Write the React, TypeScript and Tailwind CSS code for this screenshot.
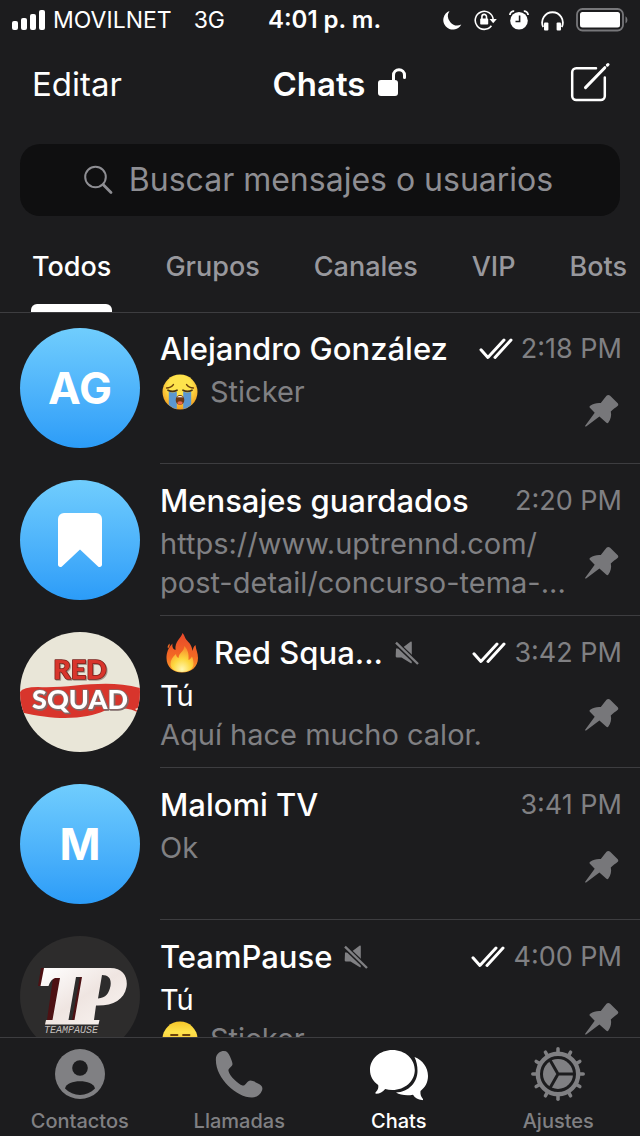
import type { ReactNode } from "react";

type Chat = {
  name: string;
  time: string;
  avatar: ReactNode;
  preview: ReactNode;
  emoji?: ReactNode;
  muted?: boolean;
  read?: boolean;
};

function SignalIcon() {
  return (
    <svg width="33" height="20" viewBox="0 0 33 20" fill="white">
      <rect x="0" y="11" width="6" height="9" rx="2" />
      <rect x="9" y="8" width="6" height="12" rx="2" />
      <rect x="18" y="4" width="6" height="16" rx="2" />
      <rect x="27" y="0" width="6" height="20" rx="2" />
    </svg>
  );
}

function MoonIcon() {
  return (
    <svg width="19" height="20" viewBox="0 0 19 20" fill="white">
      <path d="M6.5 1A9.6 9.6 0 1 0 18.3 14.6A9.4 9.4 0 0 1 6.5 1Z" />
    </svg>
  );
}

function RotationLockIcon() {
  return (
    <svg width="23" height="22" viewBox="0 0 23 22" fill="none" stroke="white" strokeWidth="1.6">
      <path d="M17.4 16.8A9 9 0 1 1 19.2 10.5" />
      <path d="M15.5 10h7.3l-3.6 4.3Z" fill="white" stroke="none" />
      <rect x="6.2" y="9.6" width="8" height="6" rx="0.8" fill="white" stroke="none" />
      <path d="M7.9 10V7.7a2.3 2.3 0 0 1 4.6 0V10" />
    </svg>
  );
}

function AlarmIcon() {
  return (
    <svg width="20" height="20" viewBox="0 0 20 20">
      <circle cx="10" cy="10.8" r="8.8" fill="white" />
      <path d="M10.6 5.5v6H6.5" fill="none" stroke="#1c1c1e" strokeWidth="1.6" />
      <path d="M.9 5A4 4 0 0 1 5.2 1.2M19.1 5A4 4 0 0 0 14.8 1.2" fill="none" stroke="white" strokeWidth="1.8" />
    </svg>
  );
}

function HeadphonesIcon() {
  return (
    <svg width="23" height="21" viewBox="0 0 23 21">
      <path d="M2.200 17A10.300 10.300 0 1 1 20.800 17" fill="none" stroke="white" strokeWidth="1.8" />
      <rect x="3" y="12.5" width="4.4" height="8" rx="1" fill="white" />
      <rect x="15.6" y="12.5" width="4.4" height="8" rx="1" fill="white" />
    </svg>
  );
}

function BatteryIcon() {
  return (
    <svg width="53" height="24" viewBox="0 0 53 24">
      <rect x="1" y="1" width="46" height="21.5" rx="5.5" fill="none" stroke="#77777a" strokeWidth="1.8" />
      <rect x="4" y="4" width="40" height="15.5" rx="2.5" fill="white" />
      <path d="M49.5 8.2a4.5 4.5 0 0 1 0 7.4Z" fill="#77777a" />
    </svg>
  );
}

function UnlockIcon() {
  return (
    <svg width="30" height="34" viewBox="0 0 30 34">
      <rect x="1" y="12" width="20" height="16" rx="3" fill="white" />
      <path d="M16.5 13V7.300a5.500 5.500 0 0 1 11 0V9.500" fill="none" stroke="white" strokeWidth="3" strokeLinecap="round" />
    </svg>
  );
}

function ComposeIcon() {
  return (
    <svg width="40" height="48" viewBox="0 0 40 48" fill="none" stroke="white" strokeLinecap="round">
      <path d="M26 7.200H6.200a4 4 0 0 0-4 4V35a4 4 0 0 0 4 4h24.600a4 4 0 0 0 4-4V16.500" strokeWidth="2.500" />
      <path d="M15.500 26.600L34.800 6.700" strokeWidth="3" />
      <path d="M37.400 4.100L38 3.500" strokeWidth="3" />
    </svg>
  );
}

function SearchIcon() {
  return (
    <svg width="29" height="30" viewBox="0 0 29 30" fill="none" stroke="#8e8e93" strokeLinecap="round">
      <circle cx="11.500" cy="12" r="10.300" strokeWidth="2" />
      <path d="M19.300 19.800L27 27.500" strokeWidth="2.800" />
    </svg>
  );
}

function ReadIcon() {
  return (
    <svg width="34" height="22" viewBox="0 0 34 22" fill="none" stroke="white" strokeWidth="3" strokeLinecap="round" strokeLinejoin="round">
      <path d="M2 11.800L8.900 19.400L25 2" />
      <path d="M16 19.400L32 2" />
    </svg>
  );
}

function MutedIcon() {
  return (
    <svg width="24" height="24" viewBox="0 0 24 24">
      <path d="M1 7.500h5.500L15.500.8c.8-.5 1.300-.2 1.300.6v20c0 .9-.6 1.100-1.300.6L6.500 16.500H2A1.300 1.300 0 0 1 .7 15.200Z" fill="#808083" />
      <path d="M.5 1.500L23 23" stroke="#1c1c1e" strokeWidth="5" />
      <path d="M1 1.700L23 23" stroke="#808083" strokeWidth="2.400" />
    </svg>
  );
}

function PinIcon() {
  return (
    <svg width="34" height="34" viewBox="0 0 34 34" fill="#77777a">
      <path d="M21.500 1.800c1-1.100 2.300-1.200 3.400-.2l7.600 7.300c1.100 1.100 1 2.300 0 3.200-1.800 1.500-4 3-6.700 5.300.9 4-.1 7.700-2.400 11.200-.5.800-1.300.8-2 .2l-7-6.300L.8 32.800 0 32.100 9.700 18.800l-4.800-5c-.6-.7-.5-1.500.3-2 3.300-2.200 6.700-3.100 10.600-2.700 2.100-2.700 3.800-5.200 5.700-7.300Z" />
    </svg>
  );
}

function CryingEmoji() {
  return (
    <svg width="36" height="36" viewBox="0 0 36 36" role="img" aria-label="😭">
      <defs>
        <radialGradient id="crying-face" cx="50%" cy="35%" r="65%">
          <stop offset="0.500" stopColor="#fee34c" />
          <stop offset="1" stopColor="#f29a1c" />
        </radialGradient>
      </defs>
      <circle cx="18" cy="18" r="17.500" fill="url(#crying-face)" />
      <path d="M4.500 14c2.500 0 5-1 7-3.500M31.500 14c-2.500 0-5-1-7-3.500" stroke="#6b3f0c" strokeWidth="1.300" fill="none" strokeLinecap="round" />
      <path d="M6.800 17.500q4.200 1.800 8 0V35q-4.500-.8-8-4ZM21.200 17.500q4.200 1.800 8 0V31q-3.500 3.200-8 4Z" fill="#5b97d0" />
      <path d="M6 16.200q4.500 2.400 9 0M21 16.200q4.500 2.400 9 0" stroke="#4c3412" strokeWidth="1.700" fill="none" strokeLinecap="round" />
      <ellipse cx="18" cy="26" rx="4.300" ry="5" fill="#6d3710" />
      <path d="M14.800 23.200q3.200-2.600 6.400 0Z" fill="white" />
      <ellipse cx="18" cy="29" rx="2.700" ry="1.800" fill="#e9674c" />
    </svg>
  );
}

function ExpressionlessEmoji() {
  return (
    <svg width="36" height="36" viewBox="0 0 36 36" role="img" aria-label="😑">
      <defs>
        <linearGradient id="flat-face" x1="0" y1="0" x2="0" y2="1">
          <stop offset="0" stopColor="#f5c529" />
          <stop offset="0.300" stopColor="#fee34c" />
          <stop offset="1" stopColor="#f29a1c" />
        </linearGradient>
      </defs>
      <circle cx="18" cy="18" r="17.500" fill="url(#flat-face)" />
      <path d="M9 14h6.500M21 14h6.500M12 24h12" stroke="#6b430c" strokeWidth="1.800" strokeLinecap="round" />
    </svg>
  );
}

function FireEmoji() {
  return (
    <svg width="36" height="40" viewBox="0 0 36 40" role="img" aria-label="🔥">
      <defs>
        <linearGradient id="fire-outer" x1="0" y1="0" x2="0" y2="1">
          <stop offset="0" stopColor="#e8472b" />
          <stop offset="0.600" stopColor="#f36a24" />
          <stop offset="1" stopColor="#fba32c" />
        </linearGradient>
        <radialGradient id="fire-inner" cx="50%" cy="90%" r="90%">
          <stop offset="0" stopColor="#fff6b0" />
          <stop offset="0.450" stopColor="#fdd83f" />
          <stop offset="1" stopColor="#f8832a" />
        </radialGradient>
      </defs>
      <path d="M18.500 0c-1 5-8 8-7 17-3-1-3.500-4-3-6.500C4 15 2.500 20 2.500 25 2.500 34 9 39.500 18 39.500S34 34 34 25c0-5-2-8-2.500-13-2 1.500-2.500 4-3 6-1-8-5-9-7-12.500C20.500 3.500 20 1.500 18.500 0Z" fill="url(#fire-outer)" />
      <path d="M5.500 10.500c-2 2-2.200 3.500-1.500 5 1.500-1.500 2-3 1.500-5Z" fill="#f36a24" />
      <path d="M20 13c1 5-5 6-5.500 12-1.800-1-2.500-2.500-2.500-4-3.500 3-5.500 6-5.500 10 0 5 5 8 11.500 8s11.500-3 11.500-8c0-3-.5-5-1.500-7.500-1 2-2 3-3.500 3.500.5-6-.5-10.500-4.500-14Z" fill="url(#fire-inner)" />
    </svg>
  );
}

function LetterAvatar({ children }: { children: ReactNode }) {
  return (
    <div className="flex size-[120px] items-center justify-center rounded-full bg-linear-to-b from-[#70cdfd] to-[#2b9cf8] text-[44px] leading-none font-bold">
      {children}
    </div>
  );
}

function RedSquadAvatar() {
  return (
    <svg width="120" height="120" viewBox="0 0 120 120" className="rounded-full bg-[#e9e6d8]">
      <path d="M0 60Q3 55 18 55C50 57 84 46 120 56V82Q108 73 84 79C68 86 40 90 0 80Z" fill="#d8352c" />
      <path d="M115 77l5-2v6Z" fill="#e9e6d8" />
      <g fontFamily="Lato, Inter, sans-serif" fontWeight="900" textAnchor="middle" strokeLinejoin="round" paintOrder="stroke">
        <text x="60" y="47" fontSize="27" fill="#d8352c" stroke="#7a211c" strokeWidth="1.500" className="drop-shadow-[1px_1px_0_#a59c90]">
          RED
        </text>
        <text x="60" y="77" fontSize="27" fill="white" stroke="#8a6a68" strokeWidth="1.500" className="drop-shadow-[1px_1px_0_#7d6a68]">
          SQUAD
        </text>
      </g>
    </svg>
  );
}

function TeamPauseAvatar() {
  return (
    <svg width="120" height="120" viewBox="0 0 120 120" className="rounded-full bg-[#2d2c2c]">
      <defs>
        <linearGradient id="tp-metal" x1="0" y1="0" x2="1" y2="1">
          <stop offset="0" stopColor="#ffffff" />
          <stop offset="0.500" stopColor="#efe5e1" />
          <stop offset="1" stopColor="#faf5f2" />
        </linearGradient>
      </defs>
      <path d="M21 32H40L26 50H18ZM33 42H41L33 84H27ZM60 41H64L56 84H52Z" fill="#4d1113" />
      <path
        d="M24 32H90C104 32 108 42 106.500 51 104 64 93 70 76 69.500L74 84H79.500L78.500 88.500H25L26 84H32.500L40 42H35Q31 43 28.500 50H20.500ZM56 41L48.500 84H54.500L62 41ZM82 39L78 62.500C86 62 89 57 90.500 50 91.500 43 89 39 82 39Z"
        fill="url(#tp-metal)"
        fillRule="evenodd"
      />
      <text x="51" y="97" fontSize="10" fontStyle="italic" fontFamily="'Liberation Mono', monospace" textAnchor="middle" fill="#c4bfbc">
        TEAMPAUSE
      </text>
    </svg>
  );
}

function BookmarkIcon() {
  return (
    <svg width="44" height="56" viewBox="0 0 44 56" fill="white">
      <path d="M6 1h32a6 6 0 0 1 6 6v45.500c0 2.500-2.500 3.300-4.200 1.700L22 37.500 4.200 54.200C2.500 55.800 0 55 0 52.500V7a6 6 0 0 1 6-6Z" />
    </svg>
  );
}

function ContactsIcon() {
  return (
    <svg width="54" height="54" viewBox="0 0 54 54">
      <circle cx="27" cy="27" r="25" fill="currentColor" />
      <circle cx="27" cy="21" r="7.800" fill="#1c1c1e" />
      <path d="M12 41.500C14 31.800 40 31.800 42 41.500 34 50 20 50 12 41.500Z" fill="#1c1c1e" />
    </svg>
  );
}

function CallsIcon() {
  return (
    <svg width="54" height="54" viewBox="0 0 54 54" fill="currentColor">
      <path d="M4 10.500C5 6.500 8 4 12 4c3 0 4.500 2 6 5.500 1.500 3.500 2.500 6 2.500 7.500 0 3-4.500 4-4 7 1 5 9.500 13 14 14.500 3 1 4.500-5 8-5 2 0 5 1.500 8.500 3.500 3 1.800 4 3.500 3 6.500-1.500 4.500-5.500 7-10 7C24 50.500 2 30 4 10.500Z" />
    </svg>
  );
}

function ChatsIcon() {
  return (
    <svg width="58" height="54" viewBox="0 0 58 54" fill="currentColor">
      <path d="M22.400 3C35 3 44.800 11.800 44.800 23S35 43 22.400 43c-2.500 0-5-.4-7.200-1-2.500 3-5.500 4.800-9 4.800-1 0-1.200-.8-.5-1.500 2.300-2.200 3-4.800 2.500-7.300C3 34.500 0 29.200 0 23 0 11.800 9.900 3 22.400 3Z" />
      <path d="M44.500 10C52.500 13 58 20.500 58 29c0 6.500-3 11.500-7.500 15-.3 3.500.3 5.500 2.300 7.800.6.700.2 1.500-.8 1.300-3.800-.4-7-2-9-5.300-6.500 1.200-13 .2-17-2.300C39 45 47.500 35 47.500 24c0-5-1-10-3-14Z" />
    </svg>
  );
}

function SettingsIcon() {
  return (
    <svg width="56" height="56" viewBox="0 0 56 56">
      <g stroke="currentColor" strokeWidth="3.500" strokeLinecap="round">
        {Array.from({ length: 12 }, (_, i) => (
          <line key={i} x1="28" y1="7" x2="28" y2="2.800" transform={`rotate(${i * 30} 28 28)`} />
        ))}
      </g>
      <circle cx="28" cy="28" r="20.200" fill="none" stroke="currentColor" strokeWidth="4.400" />
      <circle cx="28" cy="28" r="15" fill="currentColor" />
      <path d="M28 28H44M28 28L20 14.100M28 28L20 41.900" stroke="#1c1c1e" strokeWidth="3" />
    </svg>
  );
}

const tabs = ["Todos", "Grupos", "Canales", "VIP", "Bots"];

const chats: Chat[] = [
  {
    name: "Alejandro González",
    time: "2:18 PM",
    read: true,
    avatar: <LetterAvatar>AG</LetterAvatar>,
    preview: (
      <p className="flex items-center gap-3 pl-0.5">
        <CryingEmoji /> Sticker
      </p>
    ),
  },
  {
    name: "Mensajes guardados",
    time: "2:20 PM",
    avatar: (
      <LetterAvatar>
        <BookmarkIcon />
      </LetterAvatar>
    ),
    preview: (
      <p>
        https://www.uptrennd.com/
        <br />
        post-detail/concurso-tema-...
      </p>
    ),
  },
  {
    name: "Red Squa...",
    time: "3:42 PM",
    read: true,
    muted: true,
    emoji: <FireEmoji />,
    avatar: <RedSquadAvatar />,
    preview: (
      <>
        <p className="text-white">Tú</p>
        <p>Aquí hace mucho calor.</p>
      </>
    ),
  },
  {
    name: "Malomi TV",
    time: "3:41 PM",
    avatar: <LetterAvatar>M</LetterAvatar>,
    preview: <p>Ok</p>,
  },
  {
    name: "TeamPause",
    time: "4:00 PM",
    read: true,
    muted: true,
    avatar: <TeamPauseAvatar />,
    preview: (
      <>
        <p className="text-white">Tú</p>
        <p className="flex items-center gap-3 pl-0.5">
          <ExpressionlessEmoji /> Sticker
        </p>
      </>
    ),
  },
];

const navItems = [
  { label: "Contactos", icon: <ContactsIcon /> },
  { label: "Llamadas", icon: <CallsIcon /> },
  { label: "Chats", icon: <ChatsIcon />, active: true },
  { label: "Ajustes", icon: <SettingsIcon /> },
];

function ChatRow({ chat }: { chat: Chat }) {
  return (
    <li className="flex h-[152px] shrink-0 gap-5 pl-5">
      <div className="shrink-0 pt-4">{chat.avatar}</div>
      <div className="flex min-w-0 flex-1 flex-col border-b border-[#3d3d40] pt-4 pr-[18px]">
        <div className="flex items-center">
          {chat.emoji && <span className="mr-[14px] ml-1">{chat.emoji}</span>}
          <h2 className="text-[31px] leading-10 font-medium whitespace-nowrap">{chat.name}</h2>
          {chat.muted && (
            <span className="ml-3">
              <MutedIcon />
            </span>
          )}
          <div className="ml-auto flex items-center gap-2">
            {chat.read && <ReadIcon />}
            <time className="text-[27px] leading-[42px] whitespace-nowrap text-[#808083]">{chat.time}</time>
          </div>
        </div>
        <div className="flex justify-between pt-0.5">
          <div className="text-[29px] leading-[39px] whitespace-nowrap text-[#808083]">{chat.preview}</div>
          <div className="pt-[22px] pr-[3px]">
            <PinIcon />
          </div>
        </div>
      </div>
    </li>
  );
}

export default function App() {
  return (
    <div className="flex h-screen flex-col overflow-hidden bg-[#1c1c1e] font-['Inter',sans-serif] text-white">
      <div className="grid h-10 shrink-0 grid-cols-[1fr_auto_1fr] items-center pr-[11px] pl-3 text-[23px]">
        <div className="flex items-center gap-2">
          <SignalIcon />
          <span>MOVILNET</span>
          <span className="ml-[14px]">3G</span>
        </div>
        <span className="pl-2 text-2xl font-semibold">4:01 p. m.</span>
        <div className="flex items-center justify-end gap-3">
          <MoonIcon />
          <RotationLockIcon />
          <AlarmIcon />
          <HeadphonesIcon />
          <BatteryIcon />
        </div>
      </div>

      <header className="grid h-[88px] shrink-0 grid-cols-[1fr_auto_1fr] items-center pt-0.5 pr-[30px] pl-8 text-[33px]">
        <button className="justify-self-start">Editar</button>
        <h1 className="flex items-center gap-3 pl-[38px] font-semibold">
          Chats <UnlockIcon />
        </h1>
        <button aria-label="Nuevo mensaje" className="justify-self-end">
          <ComposeIcon />
        </button>
      </header>

      <div className="shrink-0 px-5 pt-4">
        <label className="flex h-[72px] items-center justify-center gap-4 rounded-[20px] bg-[#0f0f10] pr-[3px]">
          <SearchIcon />
          <input
            type="search"
            aria-label="Buscar mensajes o usuarios"
            placeholder="Buscar mensajes o usuarios"
            className="field-sizing-content text-[32px] outline-none placeholder:text-[#8e8e93]"
          />
        </label>
      </div>

      <nav className="-mb-px flex h-[97px] shrink-0 gap-[52px] border-b border-[#3d3d40] pl-[31px] text-[27px] leading-10 font-medium">
        {tabs.map((tab) =>
          tab === "Todos" ? (
            <button key={tab} className="flex flex-col justify-between pt-[31px]">
              <span className="px-px">{tab}</span>
              <span className="h-2 w-full rounded-t-md bg-white" />
            </button>
          ) : (
            <button key={tab} className="self-start px-px pt-[31px] text-[#98989d]">
              {tab}
            </button>
          ),
        )}
      </nav>

      <ul className="flex min-h-0 flex-1 flex-col overflow-hidden">
        {chats.map((chat) => (
          <ChatRow key={chat.name} chat={chat} />
        ))}
      </ul>

      <nav className="grid shrink-0 grid-cols-4 border-t border-[#3d3d40] pt-2 pr-0.5">
        {navItems.map((item) => (
          <button
            key={item.label}
            className={item.active ? "flex flex-col items-center text-white" : "flex flex-col items-center text-[#808083]"}
          >
            <span className="flex h-14 items-center">{item.icon}</span>
            <span className="pt-1 text-xl leading-[30px] font-medium">{item.label}</span>
          </button>
        ))}
      </nav>
    </div>
  );
}
